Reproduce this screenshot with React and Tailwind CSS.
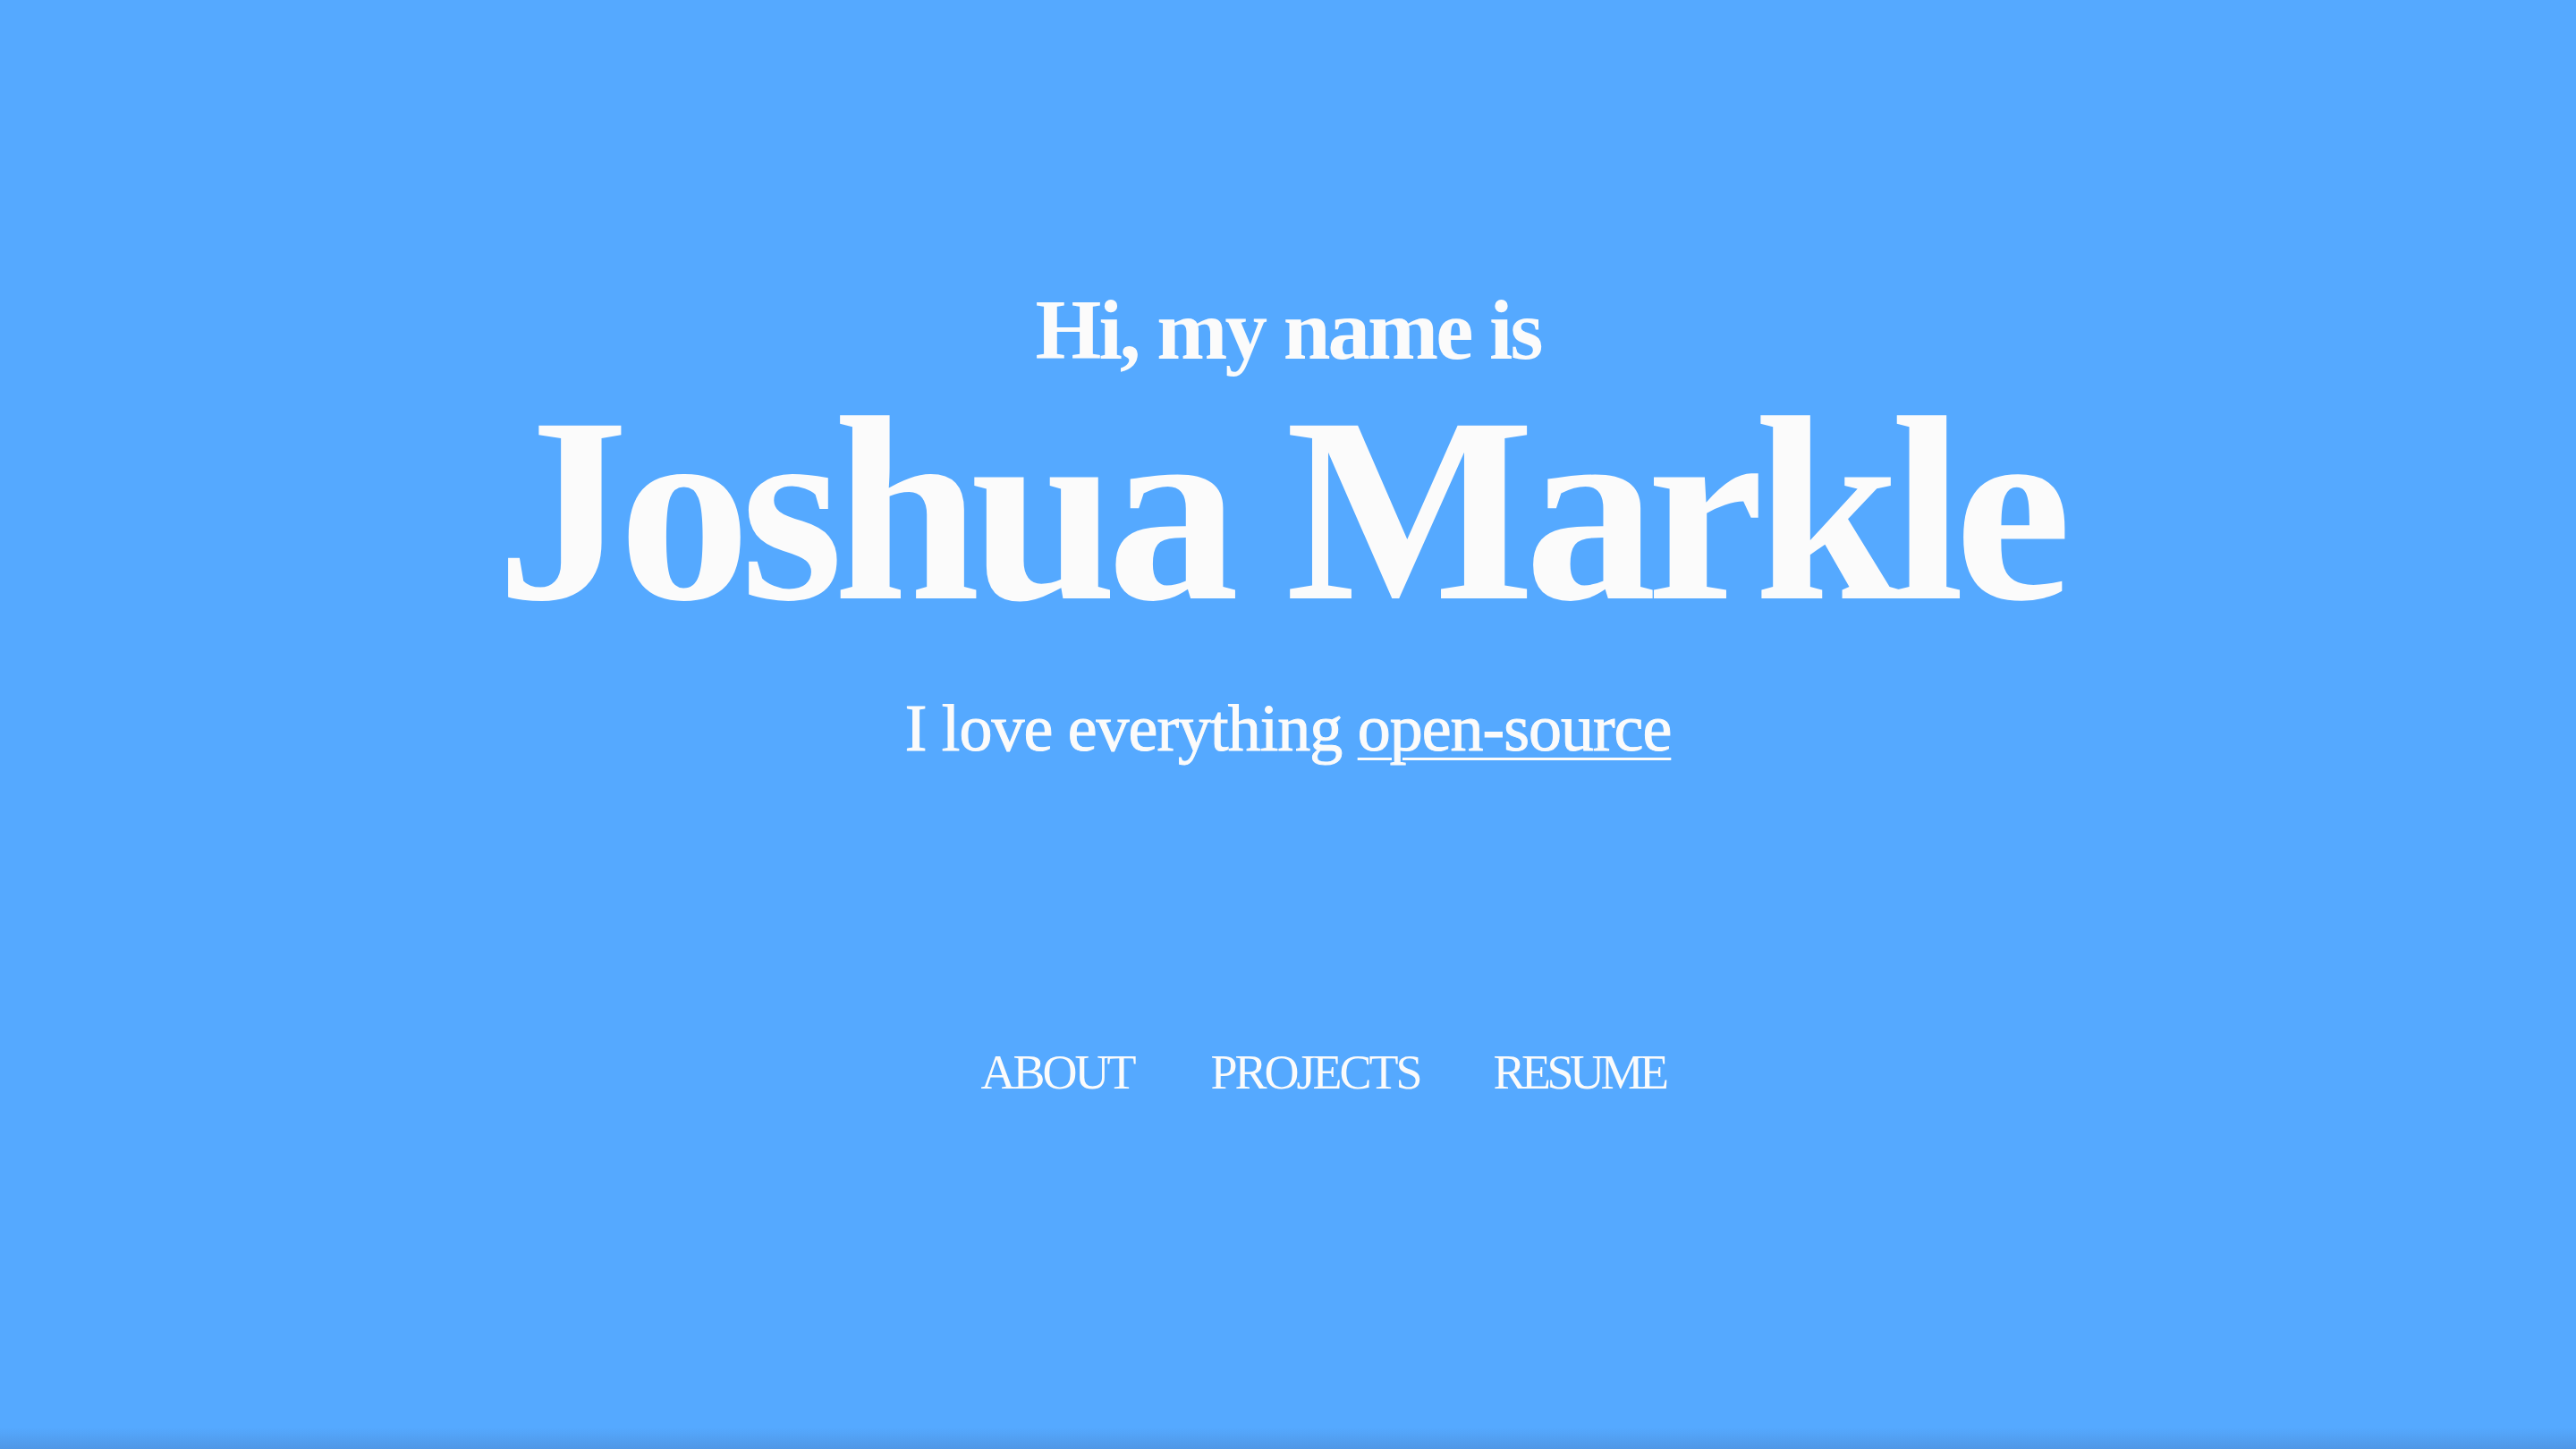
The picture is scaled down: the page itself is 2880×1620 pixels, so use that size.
export default function App() {
  return (
    <div className="relative w-[2880px] h-[1620px] overflow-hidden bg-[#55a9ff] text-[#fbfbfb] font-['Liberation_Serif',serif]">
      <div className="flex flex-col items-center pt-[322px]">
        <h2 className="text-[95px] leading-none font-bold tracking-[-3px]">Hi, my name is</h2>
        <h1 className="mt-[5px] pr-[20px] text-[295px] leading-none font-bold tracking-[-11px]">Joshua Markle</h1>
        <p className="mt-[60px] text-[74px] leading-none tracking-[-1px] [-webkit-text-stroke:1px_#fbfbfb]">
          I love everything{" "}
          <a href="#" className="underline decoration-[3px] underline-offset-[8px]">open-source</a>
        </p>
        <nav className="mt-[321px] pl-[78px] flex gap-[86px] text-[54px] leading-none tracking-[-3px]">
          <a href="#">ABOUT</a>
          <a href="#">PROJECTS</a>
          <a href="#" className="-ml-[4px] tracking-[-4.5px]">RESUME</a>
        </nav>
      </div>
      <div className="absolute bottom-0 left-0 right-0 h-[24px] bg-gradient-to-b from-transparent to-[#4f97e6]" />
    </div>
  );
}
